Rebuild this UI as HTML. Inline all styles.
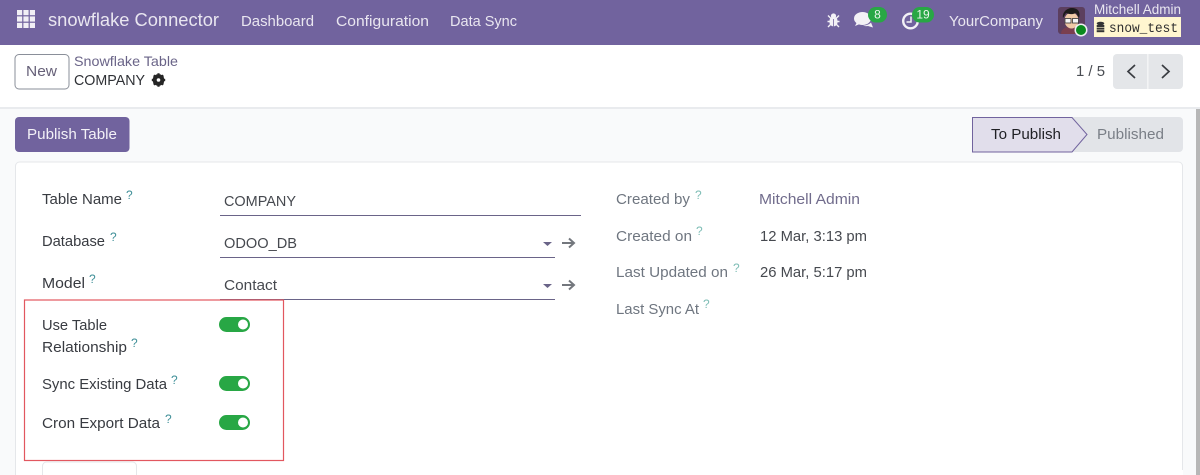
<!DOCTYPE html>
<html><head><meta charset="utf-8"><style>
html,body{margin:0;padding:0;width:1200px;height:475px;overflow:hidden;background:#f9fafb}
svg{display:block;position:absolute;left:0;top:0}
text{font-family:"Liberation Sans",sans-serif;font-size:15px;fill:#374151}
.nav{fill:#e9e6f0}
.lab{fill:#383b41}
.mut{fill:#6f7680}
.val{fill:#46494f}
.q{font-size:12px;fill:#3f8f98}
.q2{font-size:12px;fill:#7dbdb5}
</style></head><body>
<svg width="1200" height="475" viewBox="0 0 1200 475" xmlns="http://www.w3.org/2000/svg">
<rect width="1200" height="475" fill="#f9fafb"/>
<!-- navbar -->
<rect width="1200" height="45" fill="#71639e"/>
<g fill="#f1eff5">
<rect x="17" y="10" width="5.200" height="5.200"/><rect x="23.400" y="10" width="5.200" height="5.200"/><rect x="29.800" y="10" width="5.200" height="5.200"/>
<rect x="17" y="16.400" width="5.200" height="5.200"/><rect x="23.400" y="16.400" width="5.200" height="5.200"/><rect x="29.800" y="16.400" width="5.200" height="5.200"/>
<rect x="17" y="22.800" width="5.200" height="5.200"/><rect x="23.400" y="22.800" width="5.200" height="5.200"/><rect x="29.800" y="22.800" width="5.200" height="5.200"/>
</g>
<text x="48" y="26" class="nav" style="font-size:18px" textLength="171" lengthAdjust="spacingAndGlyphs">snowflake Connector</text>
<text x="241" y="26" class="nav" textLength="73" lengthAdjust="spacingAndGlyphs">Dashboard</text>
<text x="336" y="26" class="nav" textLength="93" lengthAdjust="spacingAndGlyphs">Configuration</text>
<text x="450" y="26" class="nav" textLength="67" lengthAdjust="spacingAndGlyphs">Data Sync</text>
<!-- bug -->
<ellipse cx="833.500" cy="21.500" rx="4.200" ry="5" fill="#f3f1f6"/>
<circle cx="833.500" cy="16" r="2.600" fill="#f3f1f6"/>
<path d="M828 15.500l3 3M839 15.500l-3 3M827.500 21.500h3.500M839.500 21.500h-3.500M828 27l3-3M839 27l-3-3" stroke="#f3f1f6" stroke-width="1.400" fill="none"/>
<path d="M833.500 19v8" stroke="#71639e" stroke-width=".8"/>
<!-- chat -->
<ellipse cx="862.500" cy="18.500" rx="8.500" ry="6.500" fill="#f3f1f6"/>
<path d="M857 22l-2 4 6-2.500z" fill="#f3f1f6"/>
<path d="M863 25.500c3 0 6-1 8-3l2 5-5-1.500c-2 .3-4 0-5-.500z" fill="#f3f1f6"/>
<!-- clock -->
<circle cx="910.500" cy="21" r="7.300" fill="none" stroke="#f3f1f6" stroke-width="2.400"/>
<path d="M911 16.500v5.500h-4.500" fill="none" stroke="#f3f1f6" stroke-width="1.500"/>
<!-- badges -->
<rect x="868" y="7" width="19" height="15.500" rx="7.700" fill="#28a745"/>
<text x="877.500" y="18.500" text-anchor="middle" style="font-size:12px;fill:#eaf6ec">8</text>
<rect x="912" y="7" width="22" height="15.500" rx="7.700" fill="#28a745"/>
<text x="923" y="18.500" text-anchor="middle" style="font-size:12px;fill:#eaf6ec">19</text>
<text x="949" y="26" class="nav" textLength="94" lengthAdjust="spacingAndGlyphs">YourCompany</text>
<!-- avatar -->
<rect x="1058" y="7" width="27" height="27" rx="3" fill="#5c3f5f"/>
<path d="M1061 34c0-5 4-7 10-7s10 2 10 7z" fill="#7a3f4f"/>
<ellipse cx="1071.500" cy="20.500" rx="7" ry="8" fill="#efc9a6"/>
<path d="M1063 18c-1-6 4-10 9-10s9 3 7 10l-3-5c-4 2-8 1-10 0z" fill="#1d1b1b"/>
<rect x="1065" y="18.500" width="6" height="4.500" fill="#f5f5f5" stroke="#333" stroke-width=".8"/>
<rect x="1072.500" y="18.500" width="6" height="4.500" fill="#f5f5f5" stroke="#333" stroke-width=".8"/>
<circle cx="1081" cy="30" r="6.500" fill="#f0eef5"/>
<circle cx="1081" cy="30" r="5" fill="#0a8a1e"/>
<text x="1094" y="14" class="nav" style="font-size:13.500px" textLength="87" lengthAdjust="spacingAndGlyphs">Mitchell Admin</text>
<rect x="1094" y="17" width="87" height="20" fill="#fff6d0"/>
<g fill="#333"><ellipse cx="1100.500" cy="23.500" rx="3.800" ry="1.700"/><rect x="1096.700" y="25" width="7.600" height="2"/><rect x="1096.700" y="27.600" width="7.600" height="2"/><rect x="1096.700" y="30.200" width="7.600" height="2"/></g>
<text x="1109" y="32" style="font-family:'Liberation Mono',monospace;font-size:13.500px;fill:#2f2f2f" textLength="69" lengthAdjust="spacingAndGlyphs">snow_test</text>
<!-- control panel -->
<rect y="45" width="1200" height="62" fill="#fff"/>
<rect y="107" width="1200" height="2" fill="#e9ebee"/>
<rect x="15" y="54.500" width="54" height="34.500" rx="4" fill="#fff" stroke="#8a8f99"/>
<text x="26" y="76" style="font-size:15px;fill:#666078" textLength="31" lengthAdjust="spacingAndGlyphs">New</text>
<text x="74" y="66" style="font-size:14px;fill:#6a6488" textLength="104" lengthAdjust="spacingAndGlyphs">Snowflake Table</text>
<text x="74" y="85" style="fill:#2f3136" textLength="71" lengthAdjust="spacingAndGlyphs">COMPANY</text>
<!-- gear -->
<circle cx="158.500" cy="80" r="4.300" fill="none" stroke="#262626" stroke-width="3.200"/>
<path d="M158.500 73.300v13.400M151.800 80h13.400M153.800 75.300l9.400 9.400M163.200 75.300l-9.400 9.400" stroke="#262626" stroke-width="2.200"/>
<circle cx="158.500" cy="80" r="1.800" fill="#fff"/>
<text x="1076" y="76" style="fill:#4a4d53" textLength="29" lengthAdjust="spacingAndGlyphs">1 / 5</text>
<rect x="1113" y="54" width="70" height="35" rx="4" fill="#e4e6e9"/>
<rect x="1147" y="54" width="1.600" height="35" fill="#f3f4f5"/>
<path d="M1135 65l-7 6.500 7 6.500M1162 65l7 6.500-7 6.500" fill="none" stroke="#3a3d42" stroke-width="1.700"/>
<!-- action row -->
<rect x="15" y="117" width="114.500" height="35" rx="4" fill="#71639e"/>
<text x="27" y="139" style="fill:#f3f1f7" textLength="90" lengthAdjust="spacingAndGlyphs">Publish Table</text>
<path d="M1072 117h107a4 4 0 0 1 4 4v27a4 4 0 0 1-4 4h-107z" fill="#e2e4e8"/>
<path d="M972.500 117.500h99.500l15 17-15 17.500h-99.500z" fill="#e1deeb" stroke="#71639e" stroke-width="1"/>
<text x="991" y="139" style="fill:#1f2024" textLength="70" lengthAdjust="spacingAndGlyphs">To Publish</text>
<text x="1097" y="139" style="fill:#7a7f87" textLength="67" lengthAdjust="spacingAndGlyphs">Published</text>
<!-- sheet -->
<path d="M15.500 475V166a4 4 0 0 1 4-4h1159a4 4 0 0 1 4 4v309" fill="#fff" stroke="#e5e7ea"/>
<rect x="16" y="470" width="1167" height="5" fill="#fff"/>
<!-- left group -->
<text x="42" y="204" class="lab" textLength="80" lengthAdjust="spacingAndGlyphs">Table Name</text>
<text x="126" y="199" class="q">?</text>
<text x="224" y="206" class="val" textLength="72" lengthAdjust="spacingAndGlyphs">COMPANY</text>
<rect x="220" y="215" width="361" height="1" fill="#6a6488"/>
<text x="42" y="246" class="lab" textLength="63" lengthAdjust="spacingAndGlyphs">Database</text>
<text x="110" y="241" class="q">?</text>
<text x="224" y="248" class="val" textLength="73" lengthAdjust="spacingAndGlyphs">ODOO_DB</text>
<rect x="220" y="257" width="335" height="1" fill="#6a6488"/>
<path d="M543 242h9l-4.500 4z" fill="#6a6488"/>
<path d="M562 243h12M569 238.500l5 4.500-5 4.500" fill="none" stroke="#73777d" stroke-width="2"/>
<text x="42" y="288" class="lab" textLength="43" lengthAdjust="spacingAndGlyphs">Model</text>
<text x="89" y="283" class="q">?</text>
<text x="224" y="290" class="val" textLength="53" lengthAdjust="spacingAndGlyphs">Contact</text>
<rect x="220" y="299" width="335" height="1" fill="#6a6488"/>
<path d="M543 284h9l-4.500 4z" fill="#6a6488"/>
<path d="M562 285h12M569 280.500l5 4.500-5 4.500" fill="none" stroke="#73777d" stroke-width="2"/>
<!-- red box -->
<rect x="24.500" y="300" width="259" height="160.500" fill="none" stroke="#e2575f" stroke-width="1.200"/>
<text x="42" y="330" class="lab" textLength="65" lengthAdjust="spacingAndGlyphs">Use Table</text>
<text x="42" y="352" class="lab" textLength="85" lengthAdjust="spacingAndGlyphs">Relationship</text>
<text x="131" y="347" class="q">?</text>
<rect x="219" y="317" width="31" height="15" rx="7.500" fill="#28a745"/><circle cx="243" cy="324.500" r="5" fill="#fff"/>
<text x="42" y="389" class="lab" textLength="125" lengthAdjust="spacingAndGlyphs">Sync Existing Data</text>
<text x="171" y="384" class="q">?</text>
<rect x="219" y="376" width="31" height="15" rx="7.500" fill="#28a745"/><circle cx="243" cy="383.500" r="5" fill="#fff"/>
<text x="42" y="428" class="lab" textLength="118" lengthAdjust="spacingAndGlyphs">Cron Export Data</text>
<text x="165" y="423" class="q">?</text>
<rect x="219" y="415" width="31" height="15" rx="7.500" fill="#28a745"/><circle cx="243" cy="422.500" r="5" fill="#fff"/>
<path d="M42.500 475v-9a4 4 0 0 1 4-4h86a4 4 0 0 1 4 4v9" fill="none" stroke="#e5e7ea"/>
<!-- right group -->
<text x="616" y="204" class="mut" textLength="74" lengthAdjust="spacingAndGlyphs">Created by</text>
<text x="695" y="199" class="q2">?</text>
<text x="759" y="204" style="fill:#716c8c" textLength="101" lengthAdjust="spacingAndGlyphs">Mitchell Admin</text>
<text x="616" y="241" class="mut" textLength="76" lengthAdjust="spacingAndGlyphs">Created on</text>
<text x="696" y="235" class="q2">?</text>
<text x="760" y="241" class="val" textLength="107" lengthAdjust="spacingAndGlyphs">12 Mar, 3:13 pm</text>
<text x="616" y="277" class="mut" textLength="112" lengthAdjust="spacingAndGlyphs">Last Updated on</text>
<text x="733" y="272" class="q2">?</text>
<text x="760" y="277" class="val" textLength="107" lengthAdjust="spacingAndGlyphs">26 Mar, 5:17 pm</text>
<text x="616" y="314" class="mut" textLength="83" lengthAdjust="spacingAndGlyphs">Last Sync At</text>
<text x="703" y="308" class="q2">?</text>
<!-- scrollbar -->
<rect x="1196" y="109" width="4" height="366" fill="#b7b7b7"/>
</svg>
</body></html>
